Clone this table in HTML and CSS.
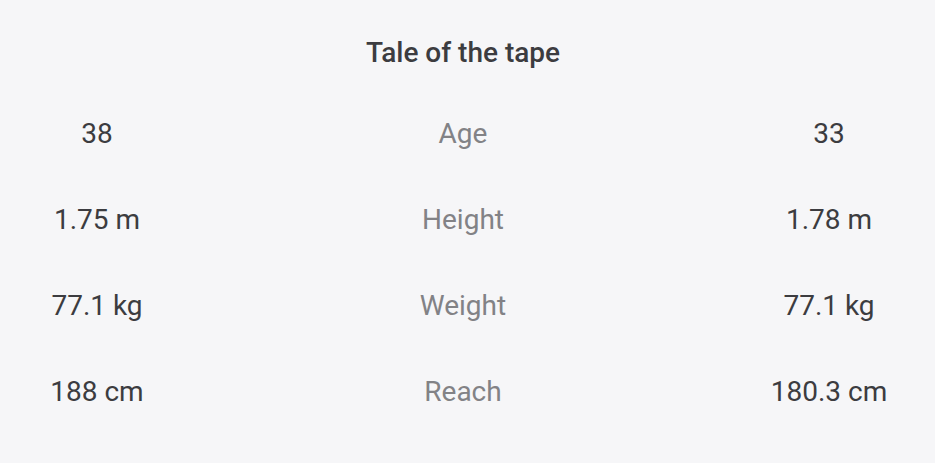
FILE: index.html
```html
<!DOCTYPE html>
<html>
<head>
<meta charset="utf-8">
<link rel="stylesheet" href="styles.css">
</head>
<body>
<div class="tape">
  <h2 class="title">Tale of the tape</h2>
  <div class="grid">
    <div class="val">38</div><div class="label">Age</div><div class="val">33</div>
    <div class="val">1.75 m</div><div class="label">Height</div><div class="val">1.78 m</div>
    <div class="val">77.1 kg</div><div class="label">Weight</div><div class="val">77.1 kg</div>
    <div class="val">188 cm</div><div class="label">Reach</div><div class="val">180.3 cm</div>
  </div>
</div>
</body>
</html>
```
FILE: styles.css
```css
html, body {
  margin: 0;
  padding: 0;
  background: #f6f6f8;
}
body {
  font-family: Roboto, "Noto Sans", sans-serif;
  color: #3c3c40;
}
.tape {
  width: 926px;
  padding-top: 37px;
}
.title {
  margin: 0;
  text-align: center;
  font-size: 28px;
  font-weight: 500;
  line-height: 32px;
}
.grid {
  margin-top: 49px;
  display: grid;
  grid-template-columns: 194px 1fr 194px;
  grid-auto-rows: 32px;
  row-gap: 54px;
  text-align: center;
  font-size: 28px;
  line-height: 32px;
}
.label {
  color: #828286;
}
```
